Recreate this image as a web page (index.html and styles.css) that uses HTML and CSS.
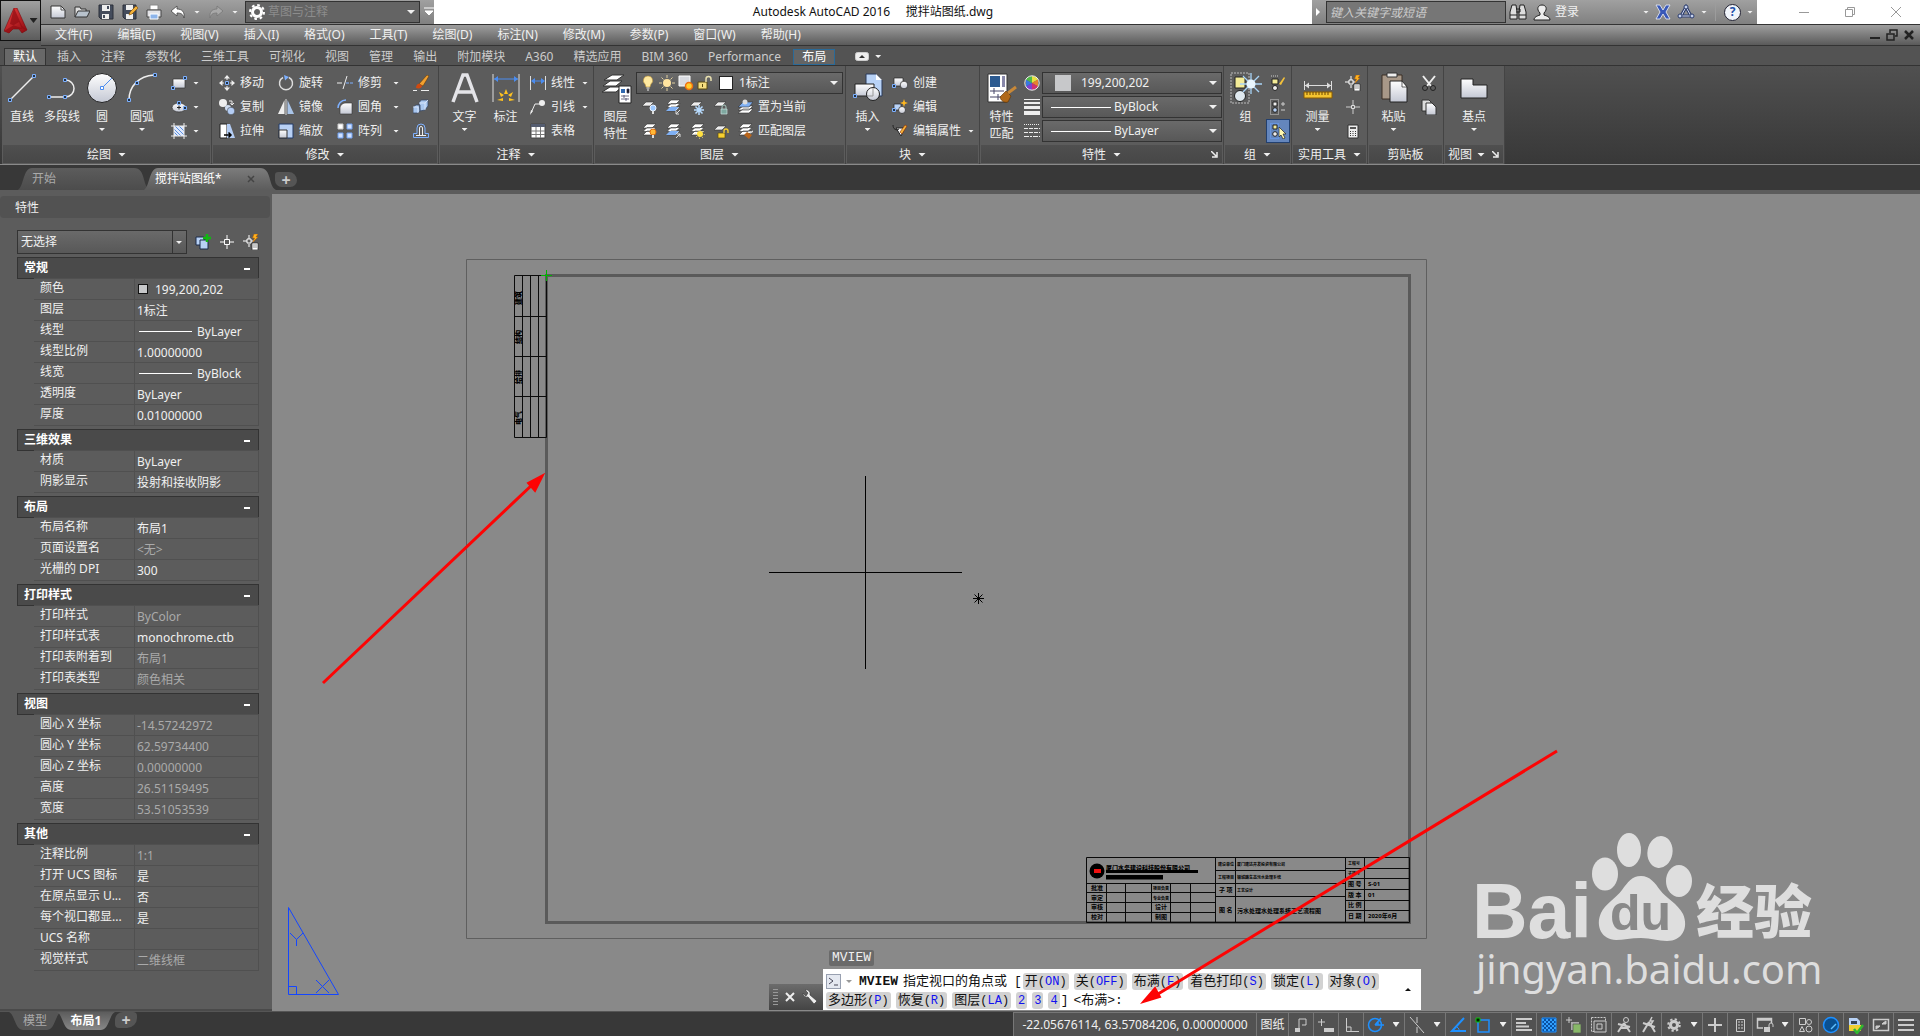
FILE: index.html
```html
<!DOCTYPE html>
<html lang="zh-CN">

<head>
  <meta charset="utf-8">
  <title>Autodesk AutoCAD 2016</title>
  <link rel="stylesheet" href="styles.css">
</head>

<body>
  <!-- Degradados y símbolos compartidos por los iconos -->
  <svg class="defs" width="0" height="0" aria-hidden="true">
    <defs>
      <linearGradient id="metal" x1="0" y1="0" x2="0" y2="1">
        <stop offset="0" stop-color="#fff" />
        <stop offset="1" stop-color="#c4c8d4" />
      </linearGradient>
      <linearGradient id="red" x1="0" y1="0" x2="1" y2="1">
        <stop offset="0" stop-color="#f04040" />
        <stop offset="1" stop-color="#8c0a10" />
      </linearGradient>
      <symbol id="stack" viewBox="0 0 16 16">
        <path d="M6 1h9l-4 4H2zM6 4.500h9l-4 4H2zM6 8h9l-4 4H2z" fill="#fff" stroke="#333" stroke-width=".6" />
      </symbol>
      <symbol id="sheet" viewBox="0 0 16 16">
        <path d="M5 3h8L9 7H1z" fill="#eee" stroke="#333" stroke-width=".6" />
      </symbol>
      <symbol id="target" viewBox="0 0 16 16">
        <path d="M8 1v4M8 11v4M1 8h4M11 8h4M5.500 5.500h5v5h-5z" fill="none" stroke="#fff" />
      </symbol>
      <symbol id="calc" viewBox="0 0 16 16">
        <path d="M6 1v4M6 10v3M0 7h4M8 7h3M4 5h4v4H4z" fill="none" stroke="#fff" />
        <path d="M11 0h4l-2 3h2l-5 5 1.500-4H9.500z" fill="#ffb320" stroke="#b35c00" stroke-width=".5" />
        <path d="M9 9h6v7H9z" fill="#fff" stroke="#222" stroke-width=".7" />
        <path d="M10.500 11h1M12.500 11h1M10.500 13h1M12.500 13h1" stroke="#222" />
      </symbol>
    </defs>
  </svg>

  <header class="top">
    <button class="app" aria-label="应用程序">
      <svg width="24" height="26" viewBox="0 0 24 26">
        <path d="M10 0h3l10 22-5 3-3-4H9l-4 4-5-2z" fill="url(#red)" stroke="#7a0a0e" stroke-width=".6" />
        <path d="M10 0L6 16l17 6-5-4zM0 23l15-9 3 7-9 0-4 4z" fill="#8e0d13" opacity=".7" />
      </svg>
      <span class="arrow dark"></span>
    </button>

    <div class="titlebar">
      <div class="quick">
        <button class="tool" aria-label="新建"><svg width="16" height="16"><path d="M1 2h10l4 4v8H1z" fill="url(#metal)" stroke="#333" /><path d="M11 2v4h4" fill="none" stroke="#555" /></svg></button>
        <button class="tool" aria-label="打开"><svg width="16" height="16"><path d="M1 13V3h5l1 2h5v3" fill="#ddd" stroke="#333" /><path d="M1 13L4 7h12l-3 6z" fill="#b8c2cc" stroke="#333" /></svg></button>
        <button class="tool" aria-label="保存"><svg width="16" height="16"><path d="M1 1h14v14H3l-2-2z" fill="#444c5c" stroke="#2a2e38" /><path d="M4 1h8v6H4zM4 10h7v5H4z" fill="#eee" /><path d="M9 2h2v3H9zM5 11h2v3H5z" fill="#444c5c" /></svg></button>
        <button class="tool" aria-label="另存为"><svg width="16" height="16"><path d="M1 1h13v14H3l-2-2z" fill="#444c5c" stroke="#2a2e38" /><path d="M4 1h7v5H4zM4 10h7v5H4z" fill="#eee" /><path d="M7 11l1-3 6-6 2 2-6 6z" fill="#f3b13a" stroke="#7a4a00" stroke-width=".6" /></svg></button>
        <button class="tool" aria-label="打印"><svg width="16" height="16"><path d="M4 1h8v5H4z" fill="#fff" stroke="#888" /><path d="M1 6h14v7H1z" fill="#e4e4e8" stroke="#444" /><path d="M4 10h8v5H4z" fill="#8db4ea" stroke="#fff" /></svg></button>
        <button class="tool" aria-label="放弃"><svg width="16" height="16"><path d="M1 7l6-5v3c5 0 8 3 7 9-1-4-3-5-7-5v3z" fill="#fff" stroke="#444" stroke-width=".8" /></svg></button>
        <span class="arrow"></span>
        <button class="tool" aria-label="重做"><svg width="16" height="16"><path d="M15 7L9 2v3C4 5 1 8 2 14c1-4 3-5 7-5v3z" fill="#a8a8a8" stroke="#777" stroke-width=".8" /></svg></button>
        <span class="arrow"></span>
        <div class="combo workspace">
          <svg width="16" height="16"><circle cx="8" cy="8" r="4.500" fill="none" stroke="#fff" stroke-width="3" /><circle cx="8" cy="8" r="7" fill="none" stroke="#fff" stroke-width="2" stroke-dasharray="2.700 2.800" /></svg>
          <select aria-label="工作空间"><option>草图与注释</option></select>
        </div>
        <button class="tool more" aria-label="自定义"><svg width="10" height="12"><path d="M0 2h10M1 5h8l-4 4z" fill="#fff" stroke="#fff" /></svg></button>
      </div>
      <div class="caption">Autodesk AutoCAD 2016&nbsp;&nbsp;&nbsp;&nbsp; 搅拌站图纸.dwg</div>
      <div class="info">
        <span class="fold"></span>
        <input class="search" type="text" placeholder="键入关键字或短语" aria-label="搜索">
        <button class="tool" aria-label="查找"><svg width="18" height="16"><path d="M3 1h4l1 7v7H1V8zM11 1h4l2 7v7h-7V8z" fill="#ddd" stroke="#222" /><path d="M7 5h4v3H7M1 11h7M10 11h7" fill="none" stroke="#222" /></svg></button>
        <button class="login"><svg width="18" height="17"><path d="M1 16c0-3 3-4 6-5l0-2C3 5 5 1 9 1s6 4 2 8v2c3 1 6 2 6 5z" fill="#eee" stroke="#222" /></svg>登录</button>
        <span class="arrow far"></span>
        <button class="tool" aria-label="Exchange"><svg width="16" height="16"><path d="M1 1h4l3 5 3-5h4l-4 7 4 7h-4l-3-5-3 5H1l4-7z" fill="#3858b8" stroke="#e0e4f0" stroke-width=".9" /></svg></button>
        <button class="tool" aria-label="A360"><svg width="18" height="16"><path d="M9 3l5 9H4z" fill="none" stroke="#2c3c6c" stroke-width="3" /><path d="M9 3l5 9H4z" fill="none" stroke="#d0d8f0" /><circle cx="9" cy="3" r="2" fill="#c8d4f0" stroke="#2c3c6c" /><circle cx="3" cy="12" r="2" fill="#c8d4f0" stroke="#2c3c6c" /><circle cx="15" cy="12" r="2" fill="#c8d4f0" stroke="#2c3c6c" /></svg></button>
        <span class="arrow"></span>
        <span class="bar"></span>
        <button class="help" aria-label="帮助">?</button>
        <span class="arrow"></span>
      </div>
      <div class="window-buttons">
        <button aria-label="最小化"><svg width="12" height="12"><path d="M1 6.500h10" stroke="#999" /></svg></button>
        <button aria-label="还原"><svg width="12" height="12"><path d="M1.500 3.500h7v7h-7zM3.500 3V1.500h7v7H9" fill="none" stroke="#999" /></svg></button>
        <button aria-label="关闭"><svg width="12" height="12"><path d="M1 1l10 10M11 1L1 11" stroke="#999" /></svg></button>
      </div>
    </div>

    <nav class="menubar">
      <ul class="menu">
        <li><a href="#">文件(F)</a></li>
        <li><a href="#">编辑(E)</a></li>
        <li><a href="#">视图(V)</a></li>
        <li><a href="#">插入(I)</a></li>
        <li><a href="#">格式(O)</a></li>
        <li><a href="#">工具(T)</a></li>
        <li><a href="#">绘图(D)</a></li>
        <li><a href="#">标注(N)</a></li>
        <li><a href="#">修改(M)</a></li>
        <li><a href="#">参数(P)</a></li>
        <li><a href="#">窗口(W)</a></li>
        <li><a href="#">帮助(H)</a></li>
      </ul>
      <div class="doc-buttons">
        <button aria-label="最小化文档"><svg width="12" height="12"><path d="M1 9h10" stroke="#222" stroke-width="2" /></svg></button>
        <button aria-label="还原文档"><svg width="12" height="12"><path d="M1 5h7v6H1zM4 4V1h7v6H9" fill="none" stroke="#222" stroke-width="1.500" /></svg></button>
        <button aria-label="关闭文档"><svg width="12" height="12"><path d="M2 2l8 8M10 2l-8 8" stroke="#222" stroke-width="2.500" /></svg></button>
      </div>
    </nav>
  </header>

  <nav class="ribbon-tabs">
    <a class="current" href="#">默认</a>
    <a href="#">插入</a>
    <a href="#">注释</a>
    <a href="#">参数化</a>
    <a href="#">三维工具</a>
    <a href="#">可视化</a>
    <a href="#">视图</a>
    <a href="#">管理</a>
    <a href="#">输出</a>
    <a href="#">附加模块</a>
    <a href="#">A360</a>
    <a href="#">精选应用</a>
    <a href="#">BIM 360</a>
    <a href="#">Performance</a>
    <a class="context" href="#">布局</a>
    <button class="minimize" aria-label="最小化功能区"><svg width="14" height="9"><rect x=".5" y=".5" width="13" height="8" rx="2" fill="#eee" stroke="#ccc" /><path d="M4 6h6L7 3z" fill="#333" /></svg></button>
    <span class="arrow"></span>
  </nav>

  <div class="ribbon">
    <!-- Dibujo -->
    <section class="panel draw">
      <div class="panel-body">
        <div class="bigs">
          <button class="big"><svg width="32" height="32"><path d="M4 28L28 4" stroke="#eee" stroke-width="1.500" /><path d="M2.500 26.500h3v3h-3zM26.500 2.500h3v3h-3z" fill="#234" stroke="#7db0ff" /></svg>直线</button>
          <button class="big"><svg width="32" height="32"><path d="M3 25h16c12 0 12-17 0-17" fill="none" stroke="#eee" stroke-width="1.500" /><path d="M1.500 23.500h3v3h-3zM17.500 23.500h3v3h-3zM17.500 6.500h3v3h-3z" fill="#234" stroke="#7db0ff" /></svg>多段线</button>
          <button class="big"><svg width="32" height="32"><circle cx="16" cy="16" r="14.500" fill="url(#metal)" stroke="#222" /><path d="M16 16L26 6" stroke="#4a8cf0" /><path d="M14.500 14.500h3v3h-3z" fill="#fff" stroke="#4a8cf0" /></svg>圆<span class="arrow"></span></button>
          <button class="big"><svg width="32" height="32"><path d="M3 28C3 14 13 4 28 3" fill="none" stroke="#eee" stroke-width="1.500" /><path d="M1.500 26.500h3v3h-3zM9.500 9.500h3v3h-3zM27.500 1.500h3v3h-3z" fill="#234" stroke="#7db0ff" /></svg>圆弧<span class="arrow"></span></button>
        </div>
        <div class="col">
          <button class="small" aria-label="矩形"><svg width="16" height="16"><path d="M2 4h12v9H2z" fill="url(#metal)" stroke="#333" stroke-width=".7" /><path d="M.5 11.500h3v3h-3zM12.500 1.500h3v3h-3z" fill="#234" stroke="#7db0ff" /></svg><span class="arrow"></span></button>
          <button class="small" aria-label="椭圆"><svg width="16" height="16"><ellipse cx="8" cy="8.500" rx="7" ry="4.500" fill="url(#metal)" stroke="#333" stroke-width=".7" /><path d="M8 6.500v4M6 8.500h4" stroke="#222" /><path d="M6.500 2.500h3v3h-3zM12.500 7.500h3v3h-3z" fill="#234" stroke="#7db0ff" /></svg><span class="arrow"></span></button>
          <button class="small" aria-label="图案填充"><svg width="16" height="16"><path d="M3 3h10v10H3z" fill="#dfe8fa" /><path d="M3 6l7 7M3 9l4 4M4 3l9 9M8 3l5 5" stroke="#5a8fe0" /><path d="M3 0v16M13 0v16M0 3h16M0 13h16" stroke="#eee" /></svg><span class="arrow"></span></button>
        </div>
      </div>
      <h2 class="panel-title">绘图<span class="arrow wide"></span></h2>
    </section>

    <!-- Modificar -->
    <section class="panel modify">
      <div class="panel-body">
        <div class="col">
          <button class="small"><svg width="16" height="16"><path d="M8 0l3 3.500H5zM8 16l3-3.500H5zM0 8l3.500-3v6zM16 8l-3.500-3v6z" fill="#eee" /><path d="M8 3v2M8 11v2M3 8h2M11 8h2" stroke="#eee" /><path d="M6.500 6.500h3v3h-3z" fill="#234" stroke="#7db0ff" /></svg>移动</button>
          <button class="small"><svg width="16" height="16"><circle cx="4" cy="4" r="4" fill="#eee" /><circle cx="9" cy="9" r="3" fill="#cfdcf0" /><circle cx="12" cy="12" r="3.800" fill="#b4cdf4" stroke="#333" stroke-width=".5" /><path d="M10 2h3v3M11.500 4l1.500 2 2-2" fill="none" stroke="#eee" /></svg>复制</button>
          <button class="small"><svg width="16" height="16"><path d="M1 1h7v14H1z" fill="#fff" stroke="#222" /><path d="M8 1h3l5 14H8z" fill="#b4cdf4" /><path d="M5 12h7M9.500 9.500L12 12l-2.500 2.500" fill="none" stroke="#000" stroke-width="1.500" /></svg>拉伸</button>
        </div>
        <div class="col">
          <button class="small"><svg width="16" height="16"><path d="M11 2.500A6.500 6.500 0 1 1 5 2.500" fill="none" stroke="#ddd" stroke-width="1.500" /><path d="M6 0l5 2-4 3.500z" fill="#7db0ff" /></svg>旋转</button>
          <button class="small"><svg width="16" height="16"><path d="M6.500 1v14H0z" fill="#eee" /><path d="M9.500 1v14H16z" fill="#a9c4e8" /><path d="M8 0v16" stroke="#ddd" /></svg>镜像</button>
          <button class="small"><svg width="16" height="16"><path d="M1 1h14v14H1z" fill="#b8d0f4" stroke="#223a66" /><path d="M1 7h8v8H1z" fill="url(#metal)" stroke="#333" /></svg>缩放</button>
        </div>
        <div class="col">
          <button class="small"><svg width="16" height="16"><path d="M0 8h5M6 14L10 1" stroke="#eee" /><path d="M9 8h7" stroke="#7db0ff" stroke-dasharray="3 1" /></svg>修剪<span class="arrow"></span></button>
          <button class="small"><svg width="16" height="16"><path d="M3 15V9c0-3 3-5 6-5h6v11z" fill="url(#metal)" stroke="#333" stroke-width=".6" /><path d="M1 9c0-4 3-8 8-8" fill="none" stroke="#7db0ff" stroke-width="1.500" /></svg>圆角<span class="arrow"></span></button>
          <button class="small"><svg width="16" height="16"><path d="M1 1h5v5H1z" fill="#fff" stroke="#ccc" /><path d="M10 1h5v5h-5zM1 10h5v5H1zM10 10h5v5h-5z" fill="#cfe0ff" stroke="#6ea0f0" /></svg>阵列<span class="arrow"></span></button>
        </div>
        <div class="col">
          <button class="small" aria-label="删除"><svg width="16" height="16"><path d="M6 9l8-9 2 1-6 10z" fill="#f0a030" stroke="#5a3000" stroke-width=".5" /><path d="M3 13c0-3 2-5 4-4l2 2c0 2-3 3-6 2z" fill="#d04a10" /><path d="M0 15.500h4M8 15.500h8" stroke="#eee" /></svg></button>
          <button class="small" aria-label="分解"><svg width="16" height="16"><path d="M0 8l3-2h4v6l-2 2H0zM6 4l2-3h7v6l-3 4-5 1z" fill="#a8c6ee" stroke="#3a4a66" stroke-width=".8" /><path d="M0 8h5v6M6 4h6v7M12 4l3-3" fill="none" stroke="#e4eefc" stroke-width=".8" /></svg></button>
          <button class="small" aria-label="偏移"><svg width="16" height="16"><path d="M.5 14.500v-4H4V5a4 4 0 0 1 8 0v5.500h3.500v4z" fill="none" stroke="#7db0ff" /><path d="M3 12.500h10M6.500 12V5a1.500 1.500 0 0 1 3 0v7" fill="none" stroke="#eee" /></svg></button>
        </div>
      </div>
      <h2 class="panel-title">修改<span class="arrow wide"></span></h2>
    </section>

    <!-- Anotación -->
    <section class="panel annotate">
      <div class="panel-body">
        <div class="bigs">
          <button class="big"><svg width="32" height="32"><path d="M4 30L14 3h4l10 27M8.500 20h15" fill="none" stroke="#e4e4e8" stroke-width="3.500" /></svg>文字<span class="arrow"></span></button>
          <button class="big"><svg width="32" height="32"><path d="M3 2v28M29 2v28" stroke="#ddd" /><path d="M4 7h24" stroke="#4a8cf0" /><path d="M4 7l4-3v6zM28 7l-4-3v6z" fill="#4a8cf0" /><path d="M16 17l2 5h-4zM9 20l5 3-3 2zM23 20l-5 3 3 2zM7 28l6-2v3zM25 28l-6-2v3z" fill="#ffc220" /></svg>标注</button>
        </div>
        <div class="col">
          <button class="small"><svg width="16" height="16"><path d="M.5 1v14M15.500 1v14" stroke="#ddd" /><path d="M2 6h12" stroke="#4a8cf0" /><path d="M1 6l4-3v6zM15 6l-4-3v6z" fill="#4a8cf0" /></svg>线性<span class="arrow"></span></button>
          <button class="small"><svg width="16" height="16"><path d="M1 14l4-9h5" fill="none" stroke="#eee" /><circle cx="12" cy="4" r="3" fill="#eee" /><path d="M0 16l1-5 2 1z" fill="#eee" /></svg>引线<span class="arrow"></span></button>
          <button class="small"><svg width="16" height="16"><path d="M1 1h14v14H1z" fill="#fff" stroke="#444" /><path d="M1 1h14v3H1z" fill="#555d70" /><path d="M1 8h14M1 11.500h14M6 4v11M10.500 4v11" stroke="#777" /></svg>表格</button>
        </div>
      </div>
      <h2 class="panel-title">注释<span class="arrow wide"></span></h2>
    </section>

    <!-- Capas -->
    <section class="panel layers">
      <div class="panel-body">
        <button class="big"><svg width="32" height="32"><path d="M12 3h12l-7 5H4zM10 9h12l-6 5H3zM10 15h12l-6 5H2z" fill="#fff" stroke="#333" /><path d="M19 14h12v17H19z" fill="#fff" stroke="#222" /><path d="M21 17h4v4h-4z" fill="#2f68b0" /><path d="M27 17h2v4h-2zM21 24h8M21 27h8M24 23v3M26 26v3" stroke="#446" stroke-width=".8" /></svg>图层<br>特性</button>
        <div class="layer-tools">
          <div class="combo layer-combo">
            <svg width="16" height="16"><path d="M8 1a4.500 4.500 0 0 0-3 8l1 3h4l1-3a4.500 4.500 0 0 0-3-8z" fill="#ffe9a0" stroke="#b89038" stroke-width=".6" /><path d="M6.500 13h3M7 15h2" stroke="#eee" /></svg>
            <svg width="16" height="16"><circle cx="8" cy="8" r="4" fill="#ffe4a0" /><path d="M8 0v3M8 13v3M0 8h3M13 8h3M2.500 2.500l2 2M11.500 11.500l2 2M13.500 2.500l-2 2M4.500 11.500l-2 2" stroke="#e0cfa0" /></svg>
            <svg width="16" height="16"><path d="M1 1h11v10H1z" fill="#d8dae0" stroke="#fff" /><circle cx="11" cy="11" r="3.500" fill="#ffcf30" stroke="#f07010" stroke-width="1.500" /></svg>
            <svg width="16" height="16"><path d="M1 7h9v7H1z" fill="#f5dd80" stroke="#5a4a10" /><path d="M9 7V4a2.500 2.500 0 0 1 5 0v2" fill="none" stroke="#e8e0b0" stroke-width="1.500" /><path d="M5.500 9v3" stroke="#5a4a10" /></svg>
            <span class="swatch white"></span>
            <select aria-label="图层"><option>1标注</option></select>
          </div>
          <div class="icon-row">
            <button class="small" aria-label="关"><svg width="16" height="16"><use href="#sheet" /><circle cx="12" cy="9" r="3" fill="#9cc8ff" stroke="#e8f2ff" /><path d="M12 12v3" stroke="#ddd" stroke-width="2" /></svg></button>
            <button class="small" aria-label="隔离"><svg width="16" height="16"><use href="#stack" /><path d="M5 8h9l-4 4H1z" fill="#7fb0f4" /><path d="M15 11l-4 4M11 12v3h3" fill="none" stroke="#ddd" /></svg></button>
            <button class="small" aria-label="冻结"><svg width="16" height="16"><use href="#sheet" /><path d="M10 6v10M5 11h10M6.500 7.500l7 7M13.500 7.500l-7 7" stroke="#b8dcff" stroke-width="1.500" /></svg></button>
            <button class="small" aria-label="锁定"><svg width="16" height="16"><use href="#sheet" /><path d="M8 10h6v5H8z" fill="#7fa8a0" stroke="#c8e0dc" stroke-width=".7" /><path d="M9 10V8a2 2 0 0 1 4 0v2" fill="none" stroke="#a8c8c0" /></svg></button>
            <button class="small"><svg width="16" height="16"><path d="M6 7h10l-4 4H1zM6 10h10l-4 4H1z" fill="#fff" stroke="#333" stroke-width=".6" /><path d="M6 3h10l-4 5H1z" fill="#7fb0f4" stroke="#333" stroke-width=".6" /><circle cx="8" cy="3" r="2.500" fill="#ddd" /></svg>置为当前</button>
          </div>
          <div class="icon-row">
            <button class="small" aria-label="打开所有图层"><svg width="16" height="16"><use href="#stack" /><circle cx="12" cy="9" r="3" fill="#ffb838" stroke="#e07010" /><path d="M12 12v3" stroke="#ddd" stroke-width="2" /></svg></button>
            <button class="small" aria-label="取消隔离"><svg width="16" height="16"><use href="#stack" /><path d="M5 8h9l-4 4H1z" fill="#7fb0f4" /><path d="M11 15l4-4M12 11h3v3" fill="none" stroke="#ddd" /></svg></button>
            <button class="small" aria-label="解冻所有图层"><svg width="16" height="16"><use href="#stack" /><circle cx="11" cy="11" r="3" fill="#ffe040" /><circle cx="11" cy="11" r="4.300" fill="none" stroke="#ffe880" stroke-dasharray="1 2.300" /></svg></button>
            <button class="small" aria-label="解锁"><svg width="16" height="16"><use href="#sheet" /><path d="M5 10h7v5H5z" fill="#f8d030" stroke="#5a4a10" stroke-width=".7" /><path d="M11 10V8a2 2 0 0 1 4 0v2" fill="none" stroke="#f8d030" stroke-width="1.300" /></svg></button>
            <button class="small"><svg width="16" height="16"><use href="#stack" /><path d="M7 12l3-3 5 3-3 4z" fill="#b8651c" /><path d="M13 10l3-2" stroke="#ddd" stroke-width="1.500" /></svg>匹配图层</button>
          </div>
        </div>
      </div>
      <h2 class="panel-title">图层<span class="arrow wide"></span></h2>
    </section>

    <!-- Bloque -->
    <section class="panel block">
      <div class="panel-body">
        <button class="big"><svg width="32" height="32"><path d="M14 2h10l6 6v16H14z" fill="#b8d2f6" stroke="#2a3a5a" /><path d="M24 2v6h6z" fill="#fff" /><path d="M3 12h19v12H3z" fill="url(#metal)" stroke="#222" /><circle cx="21" cy="22" r="6.500" fill="url(#metal)" stroke="#222" /><path d="M21 16v8h-6" fill="none" stroke="#999" /><path d="M1.500 22.500h3v3h-3z" fill="#234" stroke="#7db0ff" /></svg>插入<span class="arrow"></span></button>
        <div class="col">
          <button class="small"><svg width="16" height="16"><path d="M2 3h9v8H2z" fill="url(#metal)" stroke="#222" stroke-width=".7" /><circle cx="12" cy="10" r="3.800" fill="url(#metal)" stroke="#222" stroke-width=".7" /><path d="M.5 9.500h3v3h-3z" fill="#234" stroke="#7db0ff" /></svg>创建</button>
          <button class="small"><svg width="16" height="16"><path d="M2 5h7v6H2z" fill="#b8d2f6" stroke="#222" stroke-width=".7" /><circle cx="10" cy="11" r="3.500" fill="url(#metal)" stroke="#222" stroke-width=".7" /><path d="M12 0l1 3 3 1-3 1-1 3-1-3-3-1 3-1z" fill="#ffb820" /><path d="M.5 9.500h3v3h-3z" fill="#234" stroke="#7db0ff" /></svg>编辑</button>
          <button class="small"><svg width="16" height="16"><path d="M4 5h9l-4 8z" fill="#fff" stroke="#222" /><path d="M1 2c0 4 3 6 6 4" fill="none" stroke="#222" /><path d="M8 9l5-7 2 1-5 8z" fill="#f3b13a" stroke="#8a2a00" stroke-width=".6" /></svg>编辑属性<span class="arrow"></span></button>
        </div>
      </div>
      <h2 class="panel-title">块<span class="arrow wide"></span></h2>
    </section>

    <!-- Propiedades -->
    <section class="panel props">
      <div class="panel-body">
        <button class="big"><svg width="32" height="32"><path d="M2 2h19v28H2z" fill="#fff" stroke="#333" /><path d="M4 4h10v11H4z" fill="#2c5a90" /><path d="M16 4h3v11h-3z" fill="#88a" /><path d="M4 19h14M4 25h14M8 16v6M12 22v6" stroke="#446" /><path d="M14 25l6-6 5 5-3 6c-4 1-7-1-8-5z" fill="#b06818" stroke="#5a3000" stroke-width=".6" /><path d="M22 21l8-6" stroke="#c88838" stroke-width="3" /></svg>特性<br>匹配</button>
        <div class="col">
          <button class="small" aria-label="颜色"><svg width="16" height="16"><path d="M8 8V1a7 7 0 0 1 6 3.500z" fill="#e8e040" /><path d="M8 8l6-3.500v7z" fill="#e88030" /><path d="M8 8l6 3.500A7 7 0 0 1 8 15z" fill="#d03070" /><path d="M8 8v7a7 7 0 0 1-6-3.500z" fill="#8040d0" /><path d="M8 8l-6 3.500v-7z" fill="#3878e0" /><path d="M8 8L2 4.500A7 7 0 0 1 8 1z" fill="#50b848" /><circle cx="8" cy="8" r="7.200" fill="none" stroke="#eee" /></svg></button>
          <button class="small" aria-label="线宽"><svg width="16" height="16"><path d="M0 .5h16" stroke="#eee" /><path d="M0 4h16" stroke="#eee" stroke-width="2" /><path d="M0 8.500h16" stroke="#eee" stroke-width="3" /><path d="M0 14h16" stroke="#eee" stroke-width="4" /></svg></button>
          <button class="small" aria-label="线型"><svg width="16" height="16"><path d="M0 1.500h16" stroke="#eee" stroke-dasharray="1 1" /><path d="M0 5.500h16M0 9.500h16" stroke="#eee" stroke-dasharray="4 1" /><path d="M0 13.500h16" stroke="#eee" stroke-dasharray="5 1 2 1" /></svg></button>
        </div>
        <div class="col">
          <div class="combo"><span class="swatch grey"></span><select aria-label="对象颜色"><option>199,200,202</option></select></div>
          <div class="combo"><span class="line"></span><select aria-label="对象线宽"><option>ByBlock</option></select></div>
          <div class="combo"><span class="line"></span><select aria-label="对象线型"><option>ByLayer</option></select></div>
        </div>
      </div>
      <h2 class="panel-title">特性<span class="arrow wide"></span><svg class="launcher" width="7" height="7"><path d="M0 0l5 5M6 1v5H1" fill="none" stroke="#eee" stroke-width="1.500" /></svg></h2>
    </section>

    <!-- Grupo -->
    <section class="panel group">
      <div class="panel-body">
        <button class="big"><svg width="32" height="32"><path d="M1 1h18v30H1z" fill="none" stroke="#bbb" stroke-dasharray="2 1" /><path d="M5 5h10v11H5z" fill="#f4ec98" stroke="#222" /><circle cx="10" cy="24" r="5.500" fill="#dfe8ee" stroke="#222" /><path d="M21 1v21M10 12h22M13 4l16 16M29 4L13 20" stroke="#a8d4f8" stroke-width="1.300" /><circle cx="21" cy="12" r="4.500" fill="#e8f6ff" /></svg>组</button>
        <div class="col">
          <button class="small" aria-label="解组"><svg width="16" height="16"><path d="M1 1h8" stroke="#ccc" stroke-dasharray="1 1" /><path d="M2 4h6v5H2z" fill="#f4ec98" stroke="#222" /><circle cx="5" cy="13" r="2.500" fill="#eee" stroke="#222" /><path d="M9 9l5-7 1 1-4 7z" fill="#f3c13a" /></svg></button>
          <button class="small" aria-label="组编辑"><svg width="16" height="16"><path d="M.5.500h8v15h-8z" fill="none" stroke="#ccc" stroke-dasharray="1 1" /><path d="M3 3h4v4H3z" fill="#eee" stroke="#222" /><circle cx="5" cy="11" r="2.300" fill="#b8d2f6" stroke="#222" /><path d="M11 5h4M13 3v4M11 11h4" stroke="#ccc" /></svg></button>
          <button class="small pressed" aria-label="启用组选择"><svg width="16" height="16"><path d="M.5.500h8v15h-8z" fill="none" stroke="#6aa4ff" stroke-dasharray="1 1" /><path d="M3 2h4v4H3z" fill="#f4ec98" stroke="#222" /><circle cx="5" cy="11" r="2.300" fill="#eee" stroke="#222" /><path d="M9 4v10l2-2 2 4 2-1-2-4h3z" fill="#fff8b0" stroke="#222" stroke-width=".7" /></svg></button>
        </div>
      </div>
      <h2 class="panel-title">组<span class="arrow wide"></span></h2>
    </section>

    <!-- Utilidades -->
    <section class="panel utils">
      <div class="panel-body">
        <button class="big"><svg width="32" height="32"><path d="M2.500 9v9M29.500 9v9M3 13.500h26" stroke="#ddd" /><path d="M3 13.500l4-3v6zM29 13.500l-4-3v6z" fill="#ddd" /><path d="M2 20h28v6H2z" fill="#f4c430" stroke="#8a5a00" /><path d="M5 20v3M8 20v3M11 20v3M14 20v3M17 20v3M20 20v3M23 20v3M26 20v3" stroke="#6a4400" /></svg>测量<span class="arrow"></span></button>
        <div class="col">
          <button class="small" aria-label="快速选择"><svg width="16" height="16"><use href="#calc" /></svg></button>
          <button class="small" aria-label="点"><svg width="16" height="16"><path d="M8 1v14M1 8h14" stroke="#ccc" /><path d="M6.500 6.500h3v3h-3z" fill="#666" stroke="#ddd" /></svg></button>
          <button class="small" aria-label="计算器"><svg width="16" height="16"><path d="M3 2h10v13H3z" fill="#eee" stroke="#333" /><path d="M5 4h6v2H5z" fill="#555" /><path d="M5 8.500h6M5 10.500h6M5 12.500h6" stroke="#333" stroke-dasharray="1 1.500" /></svg></button>
        </div>
      </div>
      <h2 class="panel-title">实用工具<span class="arrow wide"></span></h2>
    </section>

    <!-- Portapapeles -->
    <section class="panel clipboard">
      <div class="panel-body">
        <button class="big"><svg width="32" height="32"><path d="M4 3h20v24H4z" fill="#a89888" stroke="#3a2e24" /><path d="M9 1h10v4H9z" fill="#eee" stroke="#333" /><path d="M12 9h12l5 6v15H12z" fill="url(#metal)" stroke="#222" /><path d="M24 9v6h5z" fill="#fff" stroke="#222" stroke-width=".7" /></svg>粘贴<span class="arrow"></span></button>
        <div class="col">
          <button class="small" aria-label="剪切"><svg width="16" height="16"><path d="M2 1l8 10M14 1L6 11" stroke="#eee" stroke-width="2" /><circle cx="4" cy="13" r="2.500" fill="none" stroke="#222" /><circle cx="12" cy="13" r="2.500" fill="none" stroke="#222" /></svg></button>
          <button class="small" aria-label="复制裁剪"><svg width="16" height="16"><path d="M1 1h7l2 2v9H1z" fill="#ddd" stroke="#333" /><path d="M5 4h6l4 4v8H5z" fill="url(#metal)" stroke="#333" /></svg></button>
        </div>
      </div>
      <h2 class="panel-title">剪贴板</h2>
    </section>

    <!-- Vista -->
    <section class="panel view">
      <div class="panel-body">
        <button class="big"><svg width="32" height="32"><path d="M3 7h12v6h14v13H3z" fill="url(#metal)" stroke="#222" /></svg>基点<span class="arrow"></span></button>
      </div>
      <h2 class="panel-title">视图<span class="arrow wide"></span><svg class="launcher" width="7" height="7"><path d="M0 0l5 5M6 1v5H1" fill="none" stroke="#eee" stroke-width="1.500" /></svg></h2>
    </section>
  </div>

  <div class="file-tabs">
    <button class="file-tab">开始</button>
    <button class="file-tab open">搅拌站图纸*<svg width="8" height="8"><path d="M1 1l6 6M7 1L1 7" stroke="#444" stroke-width="1.500" /></svg></button>
    <button class="add" aria-label="新图形">+</button>
  </div>

  <main class="work">
    <aside class="palette">
      <h1 class="palette-title">特性</h1>
      <div class="palette-tools">
        <div class="combo pick"><select aria-label="选择"><option>无选择</option></select></div>
        <button class="tool" aria-label="切换 PICKADD"><svg width="16" height="16"><path d="M1 3h8v8H1z" fill="#b8d2f6" stroke="#1a2a4a" /><path d="M5 6h8v9H5z" fill="#b8d2f6" stroke="#1a2a4a" /><path d="M12 0v8M8 4h8" stroke="#10b810" stroke-width="2.500" /></svg></button>
        <button class="tool" aria-label="选择对象"><svg width="16" height="16"><use href="#target" /></svg></button>
        <button class="tool" aria-label="快速选择"><svg width="16" height="16"><use href="#calc" /></svg></button>
      </div>

      <table class="group-table">
        <caption>常规</caption>
        <tr><th scope="row">颜色</th><td><span class="chip-color"></span>199,200,202</td></tr>
        <tr><th scope="row">图层</th><td>1标注</td></tr>
        <tr><th scope="row">线型</th><td><span class="sample"></span>ByLayer</td></tr>
        <tr><th scope="row">线型比例</th><td>1.00000000</td></tr>
        <tr><th scope="row">线宽</th><td><span class="sample"></span>ByBlock</td></tr>
        <tr><th scope="row">透明度</th><td>ByLayer</td></tr>
        <tr><th scope="row">厚度</th><td>0.01000000</td></tr>
      </table>

      <table class="group-table">
        <caption>三维效果</caption>
        <tr><th scope="row">材质</th><td>ByLayer</td></tr>
        <tr><th scope="row">阴影显示</th><td>投射和接收阴影</td></tr>
      </table>

      <table class="group-table">
        <caption>布局</caption>
        <tr><th scope="row">布局名称</th><td>布局1</td></tr>
        <tr><th scope="row">页面设置名</th><td class="off">&lt;无&gt;</td></tr>
        <tr><th scope="row">光栅的 DPI</th><td>300</td></tr>
      </table>

      <table class="group-table">
        <caption>打印样式</caption>
        <tr><th scope="row">打印样式</th><td class="off">ByColor</td></tr>
        <tr><th scope="row">打印样式表</th><td>monochrome.ctb</td></tr>
        <tr><th scope="row">打印表附着到</th><td class="off">布局1</td></tr>
        <tr><th scope="row">打印表类型</th><td class="off">颜色相关</td></tr>
      </table>

      <table class="group-table">
        <caption>视图</caption>
        <tr><th scope="row">圆心 X 坐标</th><td class="off">-14.57242972</td></tr>
        <tr><th scope="row">圆心 Y 坐标</th><td class="off">62.59734400</td></tr>
        <tr><th scope="row">圆心 Z 坐标</th><td class="off">0.00000000</td></tr>
        <tr><th scope="row">高度</th><td class="off">26.51159495</td></tr>
        <tr><th scope="row">宽度</th><td class="off">53.51053539</td></tr>
      </table>

      <table class="group-table">
        <caption>其他</caption>
        <tr><th scope="row">注释比例</th><td class="off">1:1</td></tr>
        <tr><th scope="row">打开 UCS 图标</th><td>是</td></tr>
        <tr><th scope="row">在原点显示 U...</th><td>否</td></tr>
        <tr><th scope="row">每个视口都显...</th><td>是</td></tr>
        <tr><th scope="row">UCS 名称</th><td></td></tr>
        <tr><th scope="row">视觉样式</th><td class="off">二维线框</td></tr>
      </table>
    </aside>

    <div class="canvas">
      <svg class="drawing" width="1648" height="817" viewBox="272 194 1648 817">
        <!-- Papel y marco -->
        <path d="M466.500 259.500h960v679h-960z" fill="none" stroke="#5f5f5f" />
        <path d="M546.500 275.500h863v647h-863z" fill="none" stroke="#5a5a5a" stroke-width="3" />

        <!-- Cuadro de firmas -->
        <path d="M514.500 275.500h32v162h-32zM522.500 275.500v162M530.500 275.500v162M538.500 275.500v162M514.500 316.500h32M514.500 356.500h32M514.500 396.500h32" fill="none" stroke="#0a0a0a" />
        <g class="tiny sign">
          <text transform="translate(521 305) rotate(-90)">建筑</text>
          <text transform="translate(521 344) rotate(-90)">结构</text>
          <text transform="translate(521 384) rotate(-90)">给排</text>
          <text transform="translate(521 425) rotate(-90)">电气</text>
        </g>
        <path d="M541 275.500h11M546.500 270v11" stroke="#00b400" />

        <!-- Cajetín -->
        <path d="M1086.500 857.500h323v65h-323zM1215.500 857.500v65M1235.500 857.500v65M1345.500 857.500v65M1364.500 857.500v65M1086.500 883.500h129M1086.500 892.500h129M1086.500 902.500h129M1086.500 912.500h129M1106.500 883.500v39M1125.500 883.500v39M1151.500 883.500v39M1170.500 883.500v39M1190.500 883.500v39M1215.500 870.500h130M1215.500 883.500h130M1215.500 896.500h130M1345.500 868.500h64M1345.500 878.500h64M1345.500 889.500h64M1345.500 900.500h64M1345.500 910.500h64" fill="none" stroke="#0a0a0a" />
        <circle cx="1097" cy="871" r="7.500" fill="#000" />
        <path d="M1094 869h7v4h-7z" fill="#f01010" />
        <path d="M1106 870h92v3h-92zM1106 875h57v4.500h-57z" fill="#000" />
        <g class="tiny">
          <text class="firm" x="1106" y="870">厦门水务建设科技股份有限公司</text>
          <text x="1091" y="890">批准</text>
          <text x="1091" y="900">审定</text>
          <text x="1091" y="909">审核</text>
          <text x="1091" y="919">校对</text>
          <text class="fine" x="1153" y="890">项目负责</text>
          <text class="fine" x="1153" y="900">专业负责</text>
          <text x="1155" y="909">设计</text>
          <text x="1155" y="919">制图</text>
          <text class="fine" x="1218" y="866">建设单位</text>
          <text class="fine" x="1218" y="879">工程项目</text>
          <text x="1219" y="892">子 项</text>
          <text x="1219" y="912">图 名</text>
          <text class="fine" x="1237" y="866">厦门建达开发投资有限公司</text>
          <text class="fine" x="1237" y="879">银城路生态污水处理系统</text>
          <text class="fine" x="1237" y="892">工艺设计</text>
          <text x="1237" y="913">污水处理水处理系统工艺流程图</text>
          <text class="fine" x="1348" y="865">工程号</text>
          <text class="fine" x="1348" y="875">子项号</text>
          <text x="1348" y="886">图 号</text>
          <text x="1348" y="897">版 本</text>
          <text x="1348" y="907">比 例</text>
          <text x="1348" y="918">日 期</text>
          <text x="1368" y="886">S-01</text>
          <text x="1368" y="897">01</text>
          <text x="1368" y="918">2020年6月</text>
        </g>

        <!-- Cursor en cruz -->
        <path d="M769 572.500h193M865.500 476v193" stroke="#000" />
        <path d="M973 598.500h11M978.500 593v11M974.500 594.500l8 8M982.500 594.500l-8 8" stroke="#000" />

        <!-- Icono UCS en espacio papel -->
        <path d="M288.500 907.500v87h50zM288.500 986.500h8v8M290 933l6.500 6.500 6.500-6.500M296.500 939.500v6.500M316 980l13 13M329 980l-13 13" fill="none" stroke="#1446ff" />
      </svg>

      <!-- Marca de agua -->
      <svg class="watermark" width="360" height="190" viewBox="1470 826 360 190">
        <text class="logo" x="1472" y="938">Bai</text>
        <g fill="#dedede">
          <ellipse cx="1605" cy="874" rx="13" ry="16.500" />
          <ellipse cx="1629" cy="850" rx="12" ry="17" />
          <ellipse cx="1660" cy="852" rx="12.500" ry="16" transform="rotate(10 1660 852)" />
          <ellipse cx="1679" cy="881" rx="13" ry="16" />
          <path d="M1641 876c9 0 14 7 19 14 6 8 18 14 23 24 6 14-1 27-16 27-9 0-16-3-26-3s-18 2-25 2c-14 0-21-14-15-27 4-9 15-15 21-23s10-14 19-14z" />
        </g>
        <text class="du" x="1610" y="930">du</text>
        <text class="cn" x="1696" y="933">经验</text>
        <text class="url" x="1476" y="984">jingyan.baidu.com</text>
      </svg>

      <div class="command">
        <div class="hint">MVIEW</div>
        <div class="command-bar">
          <div class="command-grip">
            <span class="dots"></span>
            <button aria-label="关闭命令行"><svg width="10" height="10"><path d="M1 1l8 8M9 1L1 9" stroke="#eee" stroke-width="2" /></svg></button>
            <button aria-label="自定义"><svg width="16" height="16"><path d="M1 4a4 4 0 0 0 5 4l6 7 3-3-7-6a4 4 0 0 0-5-5l3 3-2 3z" fill="#eee" stroke="#333" stroke-width=".6" /></svg></button>
          </div>
          <div class="prompt">
            <p>
              <svg width="15" height="15"><rect x=".5" y=".5" width="14" height="14" fill="#e4e8f0" stroke="#98a0b0" /><path d="M3 4l4 3-4 3M8 11h4" fill="none" stroke="#445" /></svg>
              <span class="arrow pale"></span>
              <b class="name">MVIEW</b>
              <span>指定视口的角点或</span>
              <span class="open-bracket">[</span>
              <button>开<span>(<em>ON</em>)</span></button>
              <button>关<span>(<em>OFF</em>)</span></button>
              <button>布满<span>(<em>F</em>)</span></button>
              <button>着色打印<span>(<em>S</em>)</span></button>
              <button>锁定<span>(<em>L</em>)</span></button>
              <button>对象<span>(<em>O</em>)</span></button>
            </p>
            <p>
              <button>多边形<span>(<em>P</em>)</span></button>
              <button>恢复<span>(<em>R</em>)</span></button>
              <button>图层<span>(<em>LA</em>)</span></button>
              <button><em>2</em></button>
              <button><em>3</em></button>
              <button><em>4</em></button>
              <span class="close-bracket">]</span>
              <span>&lt;布满&gt;:</span>
            </p>
          </div>
          <button class="history" aria-label="历史记录"><span class="arrow up"></span></button>
        </div>
      </div>

      <!-- Flechas rojas sobre el dibujo -->
      <svg class="marks" width="1648" height="842" viewBox="272 194 1648 842">
        <path d="M323 683L533 484M1557 751L1158 994" stroke="#fd0404" stroke-width="3" />
        <path d="M543 475l-8 16-7-8zM1143 1002l12-14 5 9z" fill="#fd0404" stroke="#fd0404" stroke-width="2" />
      </svg>
    </div>
  </main>

  <footer class="bottom">
    <div class="layout-tabs">
      <button class="layout-tab">模型</button>
      <button class="layout-tab current">布局1</button>
      <button class="add" aria-label="新建布局">+</button>
    </div>
    <div class="status">
      <button class="coords">-22.05676114, 63.57084206, 0.00000000</button>
      <button class="space">图纸</button>
      <button aria-label="推断约束"><svg width="18" height="18"><path d="M7 14V3h7v6h-4" fill="none" stroke="#ccc" /><path d="M3 12h5v4H3z" fill="#ccc" /></svg></button>
      <button aria-label="动态输入"><svg width="18" height="18"><path d="M1 6h7M4.500 3v7" stroke="#ccc" /><path d="M7 12h10v4H7z" fill="#ccc" /></svg></button>
      <button aria-label="正交"><svg width="18" height="18"><path d="M4.500 2v13.500H17M5 11h4v4" fill="none" stroke="#ccc" /></svg></button>
      <button class="on" aria-label="极轴追踪"><svg width="18" height="18"><circle cx="8" cy="9" r="6.500" fill="none" stroke="#1e90ff" stroke-width="1.500" /><path d="M8 9l6-7M8 9h9M11 5v4" fill="none" stroke="#1e90ff" stroke-width="1.500" /></svg></button>
      <span class="drop"><span class="arrow"></span></span>
      <button aria-label="等轴测"><svg width="18" height="18"><path d="M2 1l14 16" stroke="#ccc" /><path d="M9 1v6M9 11v6" stroke="#ccc" /></svg></button>
      <span class="drop"><span class="arrow"></span></span>
      <button class="on" aria-label="对象捕捉追踪"><svg width="18" height="18"><path d="M15 2L3 15h14" fill="none" stroke="#1e90ff" stroke-width="2" /><path d="M7 10l3 3v2" fill="none" stroke="#1e90ff" /></svg></button>
      <button class="on" aria-label="对象捕捉"><svg width="18" height="18"><path d="M4 4h11v12H4z" fill="none" stroke="#1e90ff" stroke-width="1.500" /><path d="M2 2h4v4H2z" fill="#020" stroke="#10c010" /></svg></button>
      <span class="drop"><span class="arrow"></span></span>
      <button aria-label="线宽"><svg width="18" height="18"><path d="M1 3h16M1 14h16" stroke="#ccc" stroke-width="2" /><path d="M1 7h10M1 10.500h13" stroke="#ccc" stroke-width="2" /></svg></button>
      <button class="on" aria-label="透明度"><svg width="18" height="18"><path d="M2 2h14v14H2z" fill="#0a50a0" stroke="#1e90ff" /><path d="M2 4h14M2 8h14M2 12h14" stroke="#30a0ff" stroke-width="2" stroke-dasharray="2 2" /><path d="M4 6h12M4 10h12M4 14h12" stroke="#30a0ff" stroke-width="2" stroke-dasharray="2 2" /></svg></button>
      <button aria-label="选择循环"><svg width="18" height="18"><path d="M1 4h6M4 1v6" stroke="#ccc" /><path d="M6 6h8v8H6z" fill="#aaa" /><path d="M8 8h8v9H8z" fill="#88b868" stroke="#555" stroke-width=".7" /></svg></button>
      <button aria-label="注释监视"><svg width="18" height="18"><path d="M1.500 1.500h14v14h-14z" fill="none" stroke="#ccc" stroke-dasharray="2 1" /><path d="M4 5h12v11H4z" fill="#555" stroke="#ccc" /><path d="M7 8h5v5H7z" fill="none" stroke="#ccc" /></svg></button>
      <button aria-label="注释可见性"><svg width="18" height="18"><path d="M9 7L3 16M9 7l6 9M3 8l12 3M6 12h6" stroke="#ccc" stroke-width="2" /><circle cx="11" cy="4" r="2.500" fill="none" stroke="#ccc" /></svg></button>
      <button aria-label="自动缩放"><svg width="18" height="18"><path d="M9 6L3 16M9 6l6 10M3 7l12 4" stroke="#ccc" stroke-width="2" /><path d="M12 1l-2 4h3l-3 5" fill="none" stroke="#ccc" stroke-width="1.500" /></svg></button>
      <button aria-label="切换工作空间"><svg width="18" height="18"><circle cx="9" cy="9" r="3.500" fill="none" stroke="#ccc" stroke-width="3" /><circle cx="9" cy="9" r="5.800" fill="none" stroke="#ccc" stroke-width="2" stroke-dasharray="2.300 2.250" /></svg></button>
      <span class="drop"><span class="arrow"></span></span>
      <button aria-label="注释监视器"><svg width="18" height="18"><path d="M9 2v14M2 9h14" stroke="#ccc" stroke-width="2" /></svg></button>
      <button aria-label="快捷特性"><svg width="18" height="18"><path d="M5.500 3.500h8v12h-8z" fill="none" stroke="#ccc" /><path d="M7 6h5M7 9h5M7 12h5" stroke="#ccc" stroke-dasharray="2 1" /></svg></button>
      <button aria-label="锁定用户界面"><svg width="18" height="18"><path d="M7 12H1.500V2.500h14V7M1.500 4h14" fill="none" stroke="#ccc" stroke-width="1.500" /><path d="M8 11h6v5H8z" fill="#ccc" /><path d="M13 11V9a2 2 0 0 1 4 0v2" fill="none" stroke="#ccc" /></svg></button>
      <span class="drop"><span class="arrow"></span></span>
      <button aria-label="隔离对象"><svg width="18" height="18"><path d="M2.500 2.500h6v6h-6zM7.500 15.500h-5l2.500-5z" fill="none" stroke="#ccc" /><circle cx="12" cy="6" r="2.500" fill="none" stroke="#ccc" /><circle cx="12" cy="13" r="3" fill="none" stroke="#ccc" /></svg></button>
      <button class="on" aria-label="图形性能"><svg width="18" height="18"><circle cx="9" cy="9" r="7.500" fill="#0a5090" stroke="#1e90ff" stroke-width="1.500" /><path d="M9 13l5-5" stroke="#60c0ff" stroke-width="1.500" /></svg></button>
      <button aria-label="清理"><svg width="18" height="18"><path d="M2 2h8l3 3v6H2z" fill="#b8d2f6" /><path d="M2 9h12v6H2z" fill="#f0d030" /><path d="M4 5h6v3H4z" fill="#345" /><path d="M7 13l3 4 6-8" fill="none" stroke="#30b830" stroke-width="2.500" /></svg></button>
      <button aria-label="全屏显示"><svg width="18" height="18"><path d="M1.500 3.500h15v11h-15z" fill="none" stroke="#ccc" stroke-width="1.500" /><path d="M10 8l4-3v3zM8 10l-4 3v-3zM10 8l3-2M8 10l-3 2" fill="#ccc" stroke="#ccc" /></svg></button>
      <button aria-label="自定义状态栏"><svg width="18" height="18"><path d="M1 4h16M1 9h16M1 14h16" stroke="#ccc" stroke-width="2" /></svg></button>
    </div>
  </footer>
</body>

</html>
```
FILE: styles.css
```css
* {
  box-sizing: border-box;
}

body {
  margin: 0;
  height: 100vh;
  display: flex;
  flex-direction: column;
  overflow: hidden;
  background-color: #383838;
  color: #f0f0f0;
  font-family: "Noto Sans", "Noto Sans CJK SC", sans-serif;
  font-size: 12px;
  line-height: 16px;
}

button {
  border: none;
  margin: 0;
  padding: 0;
  background: none;
  color: inherit;
  font: inherit;
  cursor: pointer;
}

a {
  color: inherit;
  text-decoration: none;
}

svg {
  display: block;
  flex: none;
}

.defs {
  position: absolute;
}

.arrow {
  flex: none;
  width: 6px;
  height: 3px;
  background: #f0f0f0;
  clip-path: polygon(0 0, 100% 0, 50% 100%);
}

.arrow.wide {
  width: 8px;
  height: 4px;
}

.arrow.dark {
  width: 8px;
  height: 5px;
  background: #222;
}

.arrow.pale {
  background: #999;
}

.arrow.up {
  background: #111;
  clip-path: polygon(50% 0, 100% 100%, 0 100%);
}

.tool {
  display: flex;
  align-items: center;
  justify-content: center;
  min-width: 16px;
}

/* cabecera */
.top {
  display: grid;
  grid-template-columns: 41px 1fr;
  grid-template-rows: 25px 21px;
  background: #555;
}

.app {
  grid-row: 1 / 3;
  height: 41px;
  display: flex;
  align-items: center;
  justify-content: center;
  gap: 2px;
  border: 1px solid #111;
  background: linear-gradient(#a0a0a0, #5c5c5c);
}

.titlebar {
  display: flex;
  background: #fff;
  border-bottom: 1px solid #333;
}

.quick,
.info {
  display: flex;
  align-items: center;
  background: linear-gradient(#a0a0a0, #808080);
}

.quick {
  gap: 8px;
  width: 393px;
  padding-left: 9px;
}

.quick .more {
  min-width: 10px;
  margin-left: -4px;
}

.caption {
  flex: 1;
  text-align: center;
  color: #111;
  line-height: 24px;
}

.info {
  width: 445px;
  gap: 6px;
}

.fold {
  width: 4px;
  height: 8px;
  margin-left: 4px;
  background: #fff;
  clip-path: polygon(0 0, 100% 50%, 0 100%);
}

.search {
  width: 180px;
  height: 22px;
  margin-right: -3px;
  padding: 0 3px;
  border: 1px solid #333;
  background: #767676;
  font: italic 12px "Noto Sans", "Noto Sans CJK SC", sans-serif;
}

.search::placeholder {
  color: #ccc;
}

.login {
  display: flex;
  align-items: center;
  gap: 4px;
}

.info .far {
  margin-left: auto;
}

.bar {
  width: 1px;
  height: 18px;
  margin: 0 2px;
  background: #9c9c9c;
}

.help {
  width: 17px;
  height: 17px;
  border: 1px solid #223;
  border-radius: 50%;
  background: #f0f4fa;
  color: #2450a8;
  font-weight: bold;
  line-height: 14px;
}

.info .arrow:last-child {
  margin-right: 4px;
}

.window-buttons {
  display: flex;
  width: 163px;
  padding-left: 24px;
}

.window-buttons button {
  width: 46px;
  display: flex;
  align-items: center;
  justify-content: center;
}

.menubar {
  display: flex;
  align-items: center;
  justify-content: space-between;
  background: linear-gradient(#9e9e9e, #5a5a5a);
  border-bottom: 1px solid #333;
}

.menu {
  display: flex;
  gap: 25px;
  margin: 0;
  padding: 0 0 0 14px;
  list-style: none;
}

.doc-buttons {
  display: flex;
  gap: 5px;
  padding-right: 5px;
}

/* cinta de opciones */
.ribbon-tabs {
  height: 20px;
  display: flex;
  align-items: center;
  gap: 20px;
  padding: 2px 4px 0;
  background: #535353;
  border-bottom: 1px solid #333;
  color: #ccc;
}

.ribbon-tabs .current {
  align-self: flex-end;
  margin-right: -9px;
  padding: 0 8px;
  border: 1px solid #333;
  border-bottom: 0;
  background: #686868;
  color: #fff;
}

.ribbon-tabs .context {
  margin-left: -8px;
  padding: 0 8px;
  border: 1px solid #2a6a98;
  background: #646464;
  color: #fff;
  line-height: 14px;
}

.ribbon-tabs .arrow {
  margin-left: -14px;
}

.ribbon {
  height: 99px;
  display: flex;
  padding-left: 2px;
  background: linear-gradient(#505050, #383838);
  border-bottom: 1px solid #8a8a8a;
}

.panel {
  display: flex;
  flex-direction: column;
  border-right: 1px solid #444;
  background: #5c5c5c;
}

.panel-body {
  flex: 1;
  display: flex;
  gap: 14px;
  padding-top: 5px;
}

.panel-title {
  position: relative;
  height: 18px;
  margin: 0 1px 1px;
  padding-top: 1px;
  display: flex;
  align-items: center;
  justify-content: center;
  gap: 7px;
  background: linear-gradient(#4f4f4f, #474747);
  font-size: 12px;
  font-weight: normal;
}

.launcher {
  position: absolute;
  right: 4px;
  top: 6px;
}

.col {
  display: flex;
  flex-direction: column;
}

.bigs {
  display: flex;
}

.big {
  width: 41px;
  display: flex;
  flex-direction: column;
  align-items: center;
  padding-top: 1px;
  line-height: 17px;
}

.big svg {
  margin-bottom: 4px;
}

.big .arrow {
  margin-top: 3px;
}

.small {
  height: 24px;
  display: flex;
  align-items: center;
  gap: 5px;
}

.small .arrow {
  margin-left: 6px;
}

.draw {
  width: 210px;
}

.draw .big {
  width: 40px;
}

.draw .panel-body {
  gap: 9px;
}

.draw .small .arrow {
  margin-left: 1px;
}

.modify {
  width: 227px;
}

.modify .panel-body {
  padding-left: 7px;
}

.annotate {
  width: 155px;
}

.annotate .panel-body {
  gap: 4px;
  padding-left: 5px;
}

.annotate .small .arrow {
  margin-left: 2px;
}

.layers {
  width: 252px;
}

.layers .panel-body {
  gap: 0;
  padding-left: 1px;
}

.block {
  width: 134px;
}

.block .panel-body {
  gap: 4px;
  padding-left: 1px;
}

.block .small .arrow {
  margin-left: 2px;
}

.props {
  width: 244px;
}

.props .panel-body {
  gap: 2px;
  padding-left: 1px;
}

.group {
  width: 68px;
}

.group .panel-body {
  gap: 0;
  padding-left: 1px;
}

.utils {
  width: 76px;
}

.utils .panel-body,
.clipboard .panel-body {
  gap: 7px;
  padding-left: 5px;
}

.clipboard {
  width: 76px;
}

.view {
  width: 61px;
}

.view .panel-body {
  justify-content: center;
}

.view .panel-title {
  justify-content: flex-start;
  gap: 5px;
  padding-left: 3px;
}

.group .small {
  width: 24px;
  justify-content: center;
}

.pressed {
  border: 1px solid #23406e;
  background: #6486bd;
}

.combo {
  position: relative;
  height: 22px;
  display: flex;
  align-items: center;
  border: 1px solid #333;
  background: linear-gradient(#6a6a6a, #585858);
}

.combo::after {
  content: "";
  position: absolute;
  right: 4px;
  top: 8px;
  width: 8px;
  height: 4px;
  background: #f0f0f0;
  clip-path: polygon(0 0, 100% 0, 50% 100%);
  pointer-events: none;
}

.combo select {
  flex: 1;
  min-width: 0;
  height: 20px;
  padding: 0 16px 0 3px;
  border: none;
  appearance: none;
  background: none;
  color: #f0f0f0;
  font: inherit;
}

.props .combo {
  width: 180px;
  margin: 1px 0;
}

.workspace {
  width: 180px;
  margin-left: -1px;
  padding-left: 3px;
  background: #646464;
}

.workspace select {
  color: #8c8c8c;
}

.layer-combo {
  width: 207px;
  gap: 3px;
  margin: 1px 0;
  padding-left: 3px;
}

.swatch {
  width: 14px;
  height: 14px;
  margin-left: 3px;
}

.white {
  background: #fff;
  border: 1px solid #222;
}

.grey {
  width: 16px;
  height: 16px;
  margin: 0 7px 0 12px;
  background: #c7c8ca;
}

.line {
  width: 60px;
  height: 1px;
  margin-left: 8px;
  background: #fff;
}

.icon-row {
  display: flex;
  gap: 8px;
  padding-left: 5px;
}

/* pestañas de dibujo */
.file-tabs {
  height: 29px;
  display: flex;
  align-items: flex-end;
  padding-left: 18px;
  background: #383838;
  border-bottom: 4px solid #5c5c5c;
}

.file-tab {
  width: 132px;
  height: 22px;
  padding-left: 14px;
  margin-right: -6px;
  background: linear-gradient(#5c5c5c, #4c4c4c);
  color: #aaa;
  text-align: left;
  clip-path: path("M0 22C6 18 5 0 14 0H116C128 0 124 18 132 22Z");
}

.file-tab.open {
  display: flex;
  align-items: center;
  justify-content: space-between;
  padding-right: 21px;
  padding-left: 11px;
  background: linear-gradient(#7c7c7c, #5c5c5c);
  color: #fff;
}

.add {
  width: 22px;
  height: 15px;
  margin-bottom: 3px;
  margin-left: 4px;
  border-radius: 4px 10px 8px 8px;
  background: #555;
  color: #ccc;
  font-size: 16px;
  font-weight: bold;
  line-height: 14px;
}

.file-tabs .add {
  margin-left: 10px;
  margin-left: 5px;
}

/* paleta de propiedades */
.work {
  flex: 1;
  min-height: 0;
  display: flex;
}

.palette {
  width: 272px;
  padding: 2px 13px 0 17px;
  background: #5c5c5c;
  border-bottom: 2px solid #4a4a4a;
}

.palette-title {
  height: 22px;
  margin: 0 -11px 12px -17px;
  padding-left: 15px;
  border-radius: 4px;
  background: #525252;
  font-size: 12px;
  font-weight: normal;
  line-height: 23px;
}

.palette-tools {
  display: flex;
  align-items: center;
  gap: 8px;
  margin-bottom: 3px;
}

.palette-tools .tool {
  flex: none;
}

.pick {
  flex: none;
  width: 170px;
  height: 24px;
}

.pick::after {
  right: 4px;
  top: 10px;
  width: 6px;
  height: 3px;
}

.pick select {
  height: 22px;
  margin-right: 13px;
  border-right: 1px solid #333;
}

.group-table {
  width: 242px;
  margin-bottom: 3px;
  border-collapse: collapse;
  border-left: 17px solid transparent;
}

.group-table caption {
  height: 22px;
  margin-bottom: -1px;
  padding: 0 6px;
  border: 1px solid #333;
  background: #4a4a4a;
  color: #fff;
  font-weight: bold;
  line-height: 19px;
  text-align: left;
}

.group-table caption::after {
  content: "";
  float: right;
  width: 6px;
  height: 2px;
  margin: 10px 2px 0;
  background: #fff;
}

.group-table tr {
  height: 21px;
}

.group-table th,
.group-table td {
  border: 1px solid #505050;
  line-height: 16px;
  text-align: left;
  white-space: nowrap;
}

.group-table th {
  width: 109px;
  padding: 0 0 3px 6px;
  font-weight: normal;
}

.group-table td {
  padding: 1px 0 0 2px;
}

.off {
  color: #aaa;
}

.chip-color {
  display: inline-block;
  width: 10px;
  height: 10px;
  margin: 0 7px 0 1px;
  border: 1px solid #111;
  background: #c7c8ca;
}

.sample {
  display: inline-block;
  width: 53px;
  height: 1px;
  margin: 0 5px 4px 2px;
  background: #fff;
}

/* área de dibujo */
.canvas {
  position: relative;
  flex: 1;
  background: #898989;
}

.drawing,
.marks {
  position: absolute;
  left: 0;
  top: 0;
}

.marks {
  pointer-events: none;
  z-index: 2;
}

.tiny {
  font-size: 6px;
  font-weight: bold;
  fill: #000;
}

.sign {
  font-size: 7px;
  font-weight: 900;
}

.tiny .firm {
  font-weight: 900;
}

.tiny .fine {
  font-size: 4px;
}

.watermark {
  position: absolute;
  right: 90px;
  bottom: -5px;
  fill: #dedede;
}

.logo {
  font: bold 77px "Liberation Sans", sans-serif;
}

.du {
  font: bold 50px "Liberation Sans", sans-serif;
  fill: #898989;
}

.cn {
  font: 900 58px "Noto Sans CJK SC", sans-serif;
}

.url {
  font: 40px "Noto Sans", sans-serif;
}

/* línea de comandos */
.command {
  position: absolute;
  left: 497px;
  bottom: 1px;
  width: 652px;
}

.hint {
  width: 45px;
  margin: 0 0 3px 60px;
  border-radius: 2px;
  background: #6a6a6a;
  font: 13px/16px "Liberation Mono", monospace;
  text-align: center;
}

.command-bar {
  display: flex;
  align-items: flex-end;
}

.command-grip {
  width: 54px;
  height: 26px;
  display: flex;
  align-items: center;
  gap: 7px;
  padding-left: 4px;
  background: linear-gradient(#6c6c6c, #444);
}

.dots {
  width: 5px;
  height: 17px;
  background: repeating-linear-gradient(#999 0 1px, transparent 1px 3px);
}

.prompt {
  flex: 1;
  height: 41px;
  padding: 3px 3px 0;
  background: #fff;
  color: #111;
  font-family: "Liberation Mono", "Noto Sans CJK SC", monospace;
}

.prompt p {
  display: flex;
  align-items: center;
  gap: 5px;
  height: 19px;
  margin: 0;
  font-size: 13px;
}

.prompt button {
  height: 17px;
  padding: 0 2px;
  border-radius: 3px;
  background: #d2d2d2;
  line-height: 16px;
}

.prompt button span,
.prompt em {
  font-size: 12px;
}

.prompt em {
  color: #1010f0;
  font-style: normal;
}

.open-bracket {
  margin: 0 -4px 0 2px;
}

.close-bracket {
  margin: 0 0 0 -4px;
}

.prompt .name {
  margin-left: 2px;
}

.history {
  width: 16px;
  height: 41px;
  display: flex;
  align-items: center;
  background: #fff;
}

/* barra inferior */
.bottom {
  height: 25px;
  display: flex;
  justify-content: space-between;
  background: #383838;
  border-top: 1px solid #555;
}

.layout-tabs {
  display: flex;
  padding-left: 9px;
}

.layout-tab {
  width: 52px;
  height: 18px;
  margin-right: -4px;
  background: #555;
  color: #aaa;
  clip-path: path("M0 0H52C46 3 46 18 38 18H14C6 18 6 3 0 0Z");
}

.layout-tab.current {
  width: 58px;
  background: linear-gradient(#5c5c5c, #888);
  color: #fff;
  font-weight: bold;
  clip-path: path("M0 0H58C52 3 52 18 44 18H14C6 18 6 3 0 0Z");
}

.layout-tabs .add {
  height: 16px;
  border-radius: 8px 4px 10px 4px;
}

.status {
  display: flex;
  align-items: stretch;
  padding-right: 2px;
  background: #525252;
  border-left: 1px solid #777;
  border-top: 1px solid #777;
}

.status button,
.drop {
  width: 25px;
  display: flex;
  align-items: center;
  justify-content: center;
  border-left: 1px solid #777;
}

.status .drop {
  width: 16px;
  border-left: none;
}

.drop .arrow {
  width: 7px;
  height: 5px;
}

.status .coords {
  width: 242px;
  border-left: none;
}

.status .space {
  width: 32px;
}
```
